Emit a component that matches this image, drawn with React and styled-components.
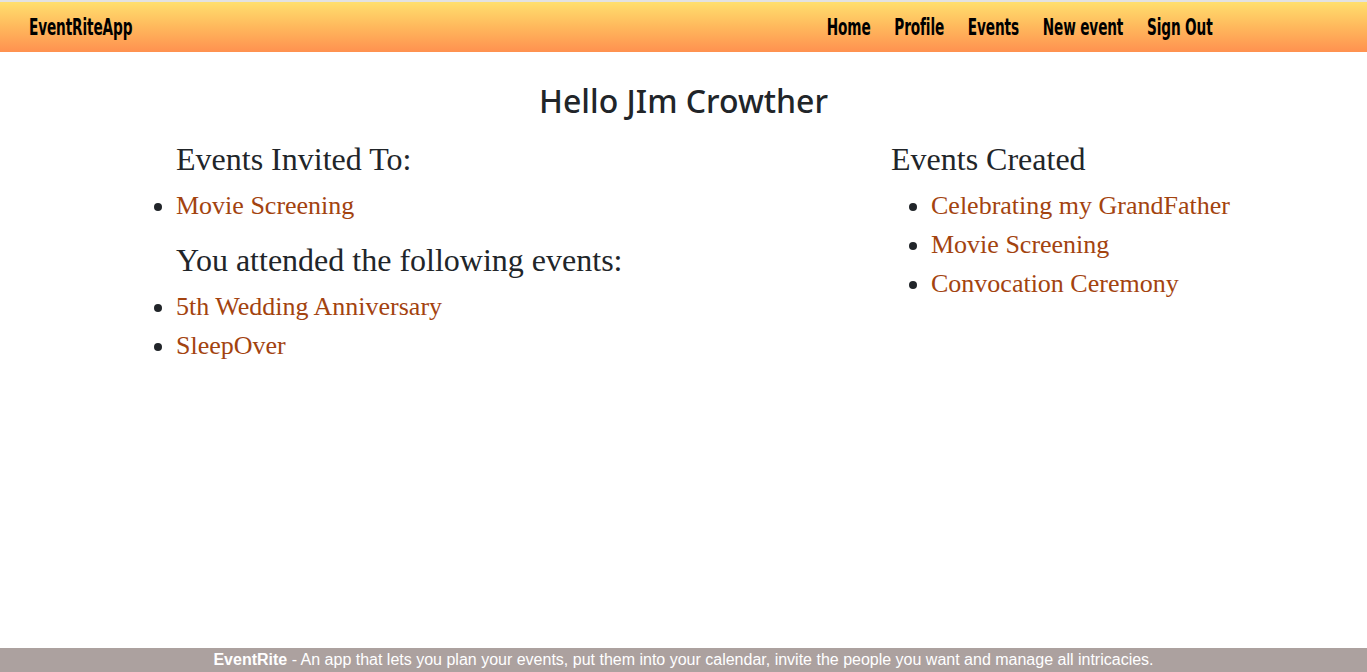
import React from "react";
import styled, { createGlobalStyle } from "styled-components";

const GlobalStyle = createGlobalStyle`
  html, body {
    margin: 0;
    padding: 0;
    background: #fff;
  }
  body {
    font-family: "Liberation Serif", "Times New Roman", serif;
    color: #212529;
  }
`;

const Page = styled.div`
  min-height: 100vh;
  display: flex;
  flex-direction: column;
`;

const TopBar = styled.nav`
  height: 50px;
  border-top: 2px solid #e2e2e2;
  background: linear-gradient(to bottom, #ffdf6e 0%, #ffb85c 50%, #ff9150 100%);
  display: flex;
  align-items: center;
  justify-content: space-between;
  padding: 0 154px 0 29px;
`;

// condensed display face: no narrow bold font installed, so squeeze DejaVu Condensed
const Squeeze = styled.div`
  display: flex;
  gap: 36px;
  transform: scaleX(0.66);
  transform-origin: ${(p) => (p.$right ? "right" : "left")} center;
`;

const NavLink = styled.a`
  font-family: "DejaVu Sans Condensed", "Liberation Sans", sans-serif;
  font-weight: 700;
  font-size: 23px;
  color: #000;
  text-decoration: none;
  letter-spacing: -0.2px;
  white-space: nowrap;
`;

const Main = styled.main`
  flex: 1;
`;

const Greeting = styled.h1`
  margin: 29px 0 19px;
  text-align: center;
  font-family: "Noto Sans", "Open Sans", sans-serif;
  font-weight: 500;
  font-size: 32px;
  line-height: 40px;
  color: #212529;
`;

const Columns = styled.div`
  display: grid;
  grid-template-columns: 715px 1fr;
  padding-left: 176px;
`;

const Column = styled.section``;

const SectionTitle = styled.h2`
  margin: 0 0 8px;
  font-weight: 400;
  font-size: 32px;
  line-height: 38px;
`;

const EventList = styled.ul`
  margin: 0 0 16px;
  padding-left: ${(p) => (p.$indent ? "40px" : "0")};
  font-size: 26px;
  line-height: 39px;
`;

const EventLink = styled.a`
  color: #a3430f;
  text-decoration: none;
`;

const Footer = styled.footer`
  height: 24px;
  background: #aca19f;
  color: #fff;
  text-align: center;
  font-family: "Liberation Sans", Arial, sans-serif;
  font-size: 16px;
  line-height: 24px;
`;

const navItems = ["Home", "Profile", "Events", "New event", "Sign Out"];
const invited = ["Movie Screening"];
const attended = ["5th Wedding Anniversary", "SleepOver"];
const created = ["Celebrating my GrandFather", "Movie Screening", "Convocation Ceremony"];

const EventItems = ({ items }) =>
  items.map((e) => (
    <li key={e}>
      <EventLink href="#">{e}</EventLink>
    </li>
  ));

const App = () => {
  return (
    <>
      <GlobalStyle />
      <Page>
        <TopBar>
          <Squeeze>
            <NavLink href="#">EventRiteApp</NavLink>
          </Squeeze>
          <Squeeze $right>
            {navItems.map((item) => (
              <NavLink key={item} href="#">
                {item}
              </NavLink>
            ))}
          </Squeeze>
        </TopBar>
        <Main>
          <Greeting>Hello JIm Crowther</Greeting>
          <Columns>
            <Column>
              <SectionTitle>Events Invited To:</SectionTitle>
              <EventList>
                <EventItems items={invited} />
              </EventList>
              <SectionTitle>You attended the following events:</SectionTitle>
              <EventList>
                <EventItems items={attended} />
              </EventList>
            </Column>
            <Column>
              <SectionTitle>Events Created</SectionTitle>
              <EventList $indent>
                <EventItems items={created} />
              </EventList>
            </Column>
          </Columns>
        </Main>
        <Footer>
          <b>EventRite</b> - An app that lets you plan your events, put them into your calendar, invite the
          people you want and manage all intricacies.
        </Footer>
      </Page>
    </>
  );
};

export default App;
